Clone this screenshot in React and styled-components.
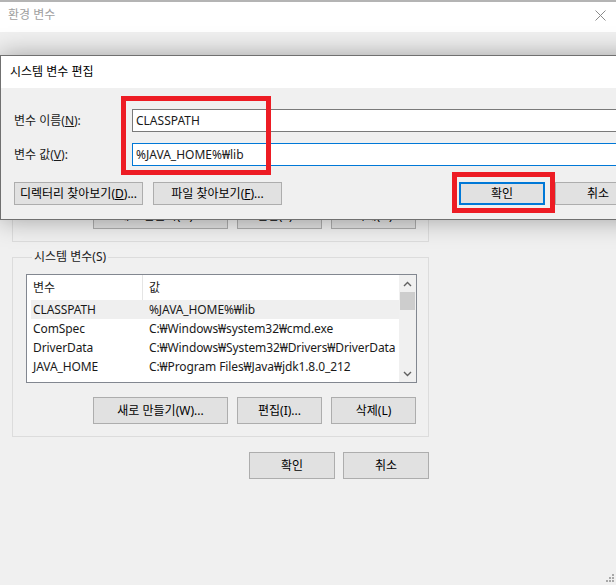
import React from "react";
import styled, { createGlobalStyle } from "styled-components";

const GlobalStyle = createGlobalStyle`
  html, body {
    margin: 0;
    padding: 0;
    background: #f0f0f0;
  }
  body {
    font-family: "Noto Sans", "Noto Sans CJK KR", sans-serif;
    font-size: 12px;
    color: #000;
  }
`;

const Screen = styled.div`
  position: relative;
  width: 616px;
  height: 585px;
  overflow: hidden;
  background: #f0f0f0;
`;

const TitleBar = styled.div`
  box-sizing: border-box;
  height: 32px;
  border-top: 2px solid #b4b4b4;
  background: #fff;
  display: flex;
  align-items: center;
  justify-content: space-between;
  padding: 0 10px 4px 8px;
  color: #a0a0a0;
  line-height: 16px;
`;

const Body = styled.div`
  padding-left: 12px;
  display: flex;
  flex-direction: column;
`;

const UserGroup = styled.div`
  box-sizing: border-box;
  width: 417px;
  height: 180px;
  margin-top: 30px;
  border: 1px solid #dcdcdc;
  padding: 0 12px 12px 0;
  display: flex;
  align-items: flex-end;
  justify-content: flex-end;
`;

const Group = styled.fieldset`
  box-sizing: border-box;
  width: 417px;
  margin: 7px 0 0;
  padding: 9px 11px 12px 13px;
  border: 1px solid #dcdcdc;
  min-width: 0;
`;

const Legend = styled.legend`
  margin-left: 6px;
  padding: 0 2px;
  line-height: 16px;
  color: #1a1a1a;
`;

const ButtonRow = styled.div`
  display: flex;
  justify-content: ${(p) => p.$justify || "flex-end"};
  gap: ${(p) => p.$gap || 9}px;
  margin-top: ${(p) => p.$top || 0}px;
  margin-right: ${(p) => p.$right || 0}px;
`;

const Button = styled.button`
  box-sizing: border-box;
  width: ${(p) => p.$w}px;
  height: ${(p) => p.$h || 27}px;
  padding: 0;
  background: #e1e1e1;
  border: ${(p) => (p.$focus ? "2px solid #0078d7" : "1px solid #adadad")};
  font: inherit;
  color: #000;
  line-height: 16px;
  white-space: nowrap;
  overflow: hidden;
`;

const ListBox = styled.div`
  box-sizing: border-box;
  width: 391px;
  height: 109px;
  border: 1px solid #828790;
  background: #fff;
  display: flex;
`;

const ListMain = styled.div`
  flex: 1;
  min-width: 0;
  overflow: hidden;
`;

const Cols = styled.div`
  display: grid;
  grid-template-columns: 111px 1fr;
  margin-left: 4px;
  height: ${(p) => p.$h}px;
  align-items: center;
  background: ${(p) => (p.$active ? "#efefef" : "transparent")};
  white-space: nowrap;
  color: #1a1a1a;
`;

const Cell = styled.div`
  padding-left: ${(p) => p.$pad}px;
  line-height: 16px;
  overflow: hidden;
  letter-spacing: -0.1px;
`;

const HeadCell = styled(Cell)`
  height: 100%;
  display: flex;
  align-items: center;
  border-left: ${(p) => (p.$sep ? "1px solid #e5e5e5" : "none")};
`;

const ScrollBar = styled.div`
  width: 17px;
  background: #f0f0f0;
  display: flex;
  flex-direction: column;
  align-items: center;
`;

const Arrow = styled.div`
  height: 17px;
  width: 17px;
  display: flex;
  align-items: center;
  justify-content: center;
`;

const Thumb = styled.div`
  width: 15px;
  height: 18px;
  background: #cdcdcd;
`;

const Track = styled.div`
  flex: 1;
`;

const Footer = styled.div`
  width: 417px;
  display: flex;
  justify-content: flex-end;
  gap: 8px;
  margin-top: 15px;
`;

/* edit dialog that sits over the env window */
const Dialog = styled.div`
  position: absolute;
  top: 55px;
  left: 0;
  width: 656px;
  height: 165px;
  box-sizing: border-box;
  border: 1px solid #707070;
  background: #f0f0f0;
  box-shadow: 0 0 24px rgba(0, 0, 0, 0.34);
  display: flex;
  flex-direction: column;
`;

const DialogTitle = styled.div`
  height: 31px;
  background: #fff;
  padding: 0 0 1px 9px;
  display: flex;
  align-items: center;
  line-height: 16px;
  flex-shrink: 0;
`;

const DialogBody = styled.div`
  padding: 21px 14px 0 13px;
  display: flex;
  flex-direction: column;
`;

const Field = styled.div`
  display: flex;
  align-items: center;
  margin-bottom: ${(p) => p.$mb}px;
`;

const Label = styled.label`
  width: 118px;
  line-height: 16px;
  color: #1a1a1a;
  flex-shrink: 0;
`;

const Input = styled.div`
  flex: 1;
  box-sizing: border-box;
  height: 23px;
  border: 1px solid ${(p) => (p.$focus ? "#0078d7" : "#7a7a7a")};
  background: #fff;
  display: flex;
  align-items: center;
  padding-left: 3px;
  line-height: 16px;
  color: #1a1a1a;
`;

const DialogButtons = styled.div`
  display: flex;
  justify-content: space-between;
  margin-top: 16px;
`;

const Mark = styled.div`
  position: absolute;
  left: ${(p) => p.$x}px;
  top: ${(p) => p.$y}px;
  width: ${(p) => p.$w}px;
  height: ${(p) => p.$h}px;
  box-sizing: border-box;
  border: 5px solid #ed1c24;
`;

const Grip = styled.svg`
  position: absolute;
  right: 2px;
  bottom: 2px;
`;

const rows = [
  ["CLASSPATH", "%JAVA_HOME%₩lib"],
  ["ComSpec", "C:₩Windows₩system32₩cmd.exe"],
  ["DriverData", "C:₩Windows₩System32₩Drivers₩DriverData"],
  ["JAVA_HOME", "C:₩Program Files₩Java₩jdk1.8.0_212"],
];

const Chevron = ({ up }) => (
  <svg width="9" height="6" viewBox="0 0 9 6">
    <path
      d={up ? "M1 5 L4.5 1.5 L8 5" : "M1 1 L4.5 4.5 L8 1"}
      fill="none"
      stroke="#606060"
      strokeWidth="1.4"
    />
  </svg>
);

export default function App() {
  return (
    <>
      <GlobalStyle />
      <Screen>
        <TitleBar>
          <span>환경 변수</span>
          <svg width="11" height="11" viewBox="0 0 11 11">
            <path d="M0.5 0.5 L10.5 10.5 M10.5 0.5 L0.5 10.5" stroke="#8a8a8a" strokeWidth="1" />
          </svg>
        </TitleBar>

        <Body>
          <UserGroup>
            <ButtonRow>
              <Button $w={135}>새로 만들기(N)...</Button>
              <Button $w={85}>편집(E)...</Button>
              <Button $w={85}>삭제(D)</Button>
            </ButtonRow>
          </UserGroup>

          <Group>
            <Legend>시스템 변수(S)</Legend>
            <ListBox>
              <ListMain>
                <Cols $h={25}>
                  <HeadCell $pad={2}>변수</HeadCell>
                  <HeadCell $pad={6} $sep>값</HeadCell>
                </Cols>
                {rows.map(([name, value], i) => (
                  <Cols key={name} $h={19} $active={i === 0}>
                    <Cell $pad={2}>{name}</Cell>
                    <Cell $pad={7}>{value}</Cell>
                  </Cols>
                ))}
              </ListMain>
              <ScrollBar>
                <Arrow><Chevron up /></Arrow>
                <Thumb />
                <Track />
                <Arrow><Chevron /></Arrow>
              </ScrollBar>
            </ListBox>
            <ButtonRow $top={14} $right={1}>
              <Button $w={135}>새로 만들기(W)...</Button>
              <Button $w={85}>편집(I)...</Button>
              <Button $w={85}>삭제(L)</Button>
            </ButtonRow>
          </Group>

          <Footer>
            <Button $w={86}>확인</Button>
            <Button $w={86}>취소</Button>
          </Footer>
        </Body>

        <Dialog>
          <DialogTitle>시스템 변수 편집</DialogTitle>
          <DialogBody>
            <Field $mb={11}>
              <Label>변수 이름(<u>N</u>):</Label>
              <Input>CLASSPATH</Input>
            </Field>
            <Field $mb={0}>
              <Label>변수 값(<u>V</u>):</Label>
              <Input $focus>%JAVA_HOME%₩lib</Input>
            </Field>
            <DialogButtons>
              <ButtonRow $gap={10}>
                <Button $w={129} $h={23}>디렉터리 찾아보기(<u>D</u>)...</Button>
                <Button $w={129} $h={23}>파일 찾아보기(<u>F</u>)...</Button>
              </ButtonRow>
              <ButtonRow $gap={10}>
                <Button $w={86} $h={23} $focus>확인</Button>
                <Button $w={86} $h={23}>취소</Button>
              </ButtonRow>
            </DialogButtons>
          </DialogBody>
        </Dialog>

        <Mark $x={121} $y={96} $w={150} $h={79} />
        <Mark $x={452} $y={172} $w={103} $h={41} />

        <Grip width="10" height="10" viewBox="0 0 10 10">
          {[[8, 0], [5, 3], [8, 3], [2, 6], [5, 6], [8, 6]].map(([x, y]) => (
            <rect key={`${x}-${y}`} x={x} y={y + 1} width="2" height="2" fill="#a8a8a8" />
          ))}
        </Grip>
      </Screen>
    </>
  );
}
